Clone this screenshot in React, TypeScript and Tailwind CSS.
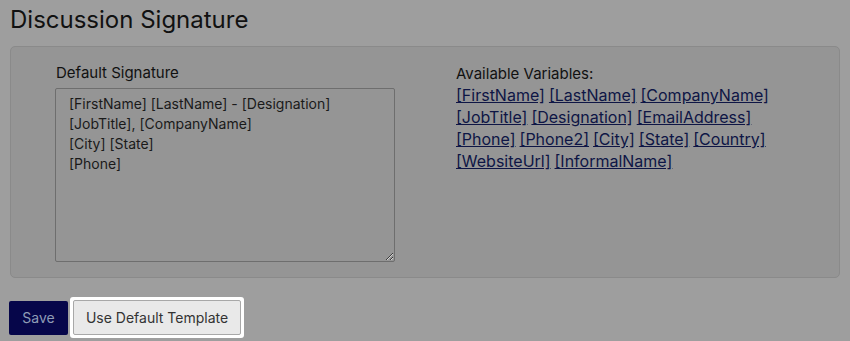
import React from "react";

const variables = [
  ["[FirstName]", "[LastName]", "[CompanyName]"],
  ["[JobTitle]", "[Designation]", "[EmailAddress]"],
  ["[Phone]", "[Phone2]", "[City]", "[State]", "[Country]"],
  ["[WebsiteUrl]", "[InformalName]"],
];

const defaultSignature = `[FirstName] [LastName] - [Designation]
[JobTitle], [CompanyName]
[City] [State]
[Phone]`;

export default function App() {
  return (
    <div className="min-h-screen bg-[#9e9e9e] pl-[9px] pr-[10px] pt-[4px] font-['Inter',sans-serif] text-[#111]">
      <h1 className="ml-[1px] text-[24px] leading-[32px] font-normal">Discussion Signature</h1>

      <div className="ml-[1px] mt-[10px] h-[232px] rounded-[5px] border border-[#8a8a8a] bg-[#959595] pl-[44px] pt-[16px] flex">
        <div className="w-[341px]">
          <label className="block text-[15px] leading-[20px] mb-[5px] ml-[1px]">Default Signature</label>
          <textarea
            className="block w-[340px] h-[174px] resize-y rounded-[2px] border border-[#6e6e6e] bg-[#959595] px-[13px] py-[5px] text-[14px] leading-[20px] text-[#1a1a1a] outline-none"
            defaultValue={defaultSignature}
          />
        </div>

        <div className="ml-[60px] pt-[1px]">
          <div className="text-[15px] leading-[20px]">Available Variables:</div>
          <div className="text-[16px] leading-[22px]">
            {variables.map((row, i) => (
              <div key={i} className="flex gap-[4px]">
                {row.map((v) => (
                  <a key={v} href="#" className="text-[#0e1545] underline">
                    {v}
                  </a>
                ))}
              </div>
            ))}
          </div>
        </div>
      </div>

      <div className="mt-[19px] flex items-center">
        <button className="h-[34px] w-[59px] rounded-[2px] bg-[#06064a] text-[14px] text-[#8f9cb6]">Save</button>
        <div className="ml-[2px] rounded-[3px] bg-white p-[3px]">
          <button className="h-[35px] w-[168px] rounded-[2px] border border-[#a8a8a8] bg-[#e9e9e9] text-[14px] text-[#333]">
            Use Default Template
          </button>
        </div>
      </div>
    </div>
  );
}
